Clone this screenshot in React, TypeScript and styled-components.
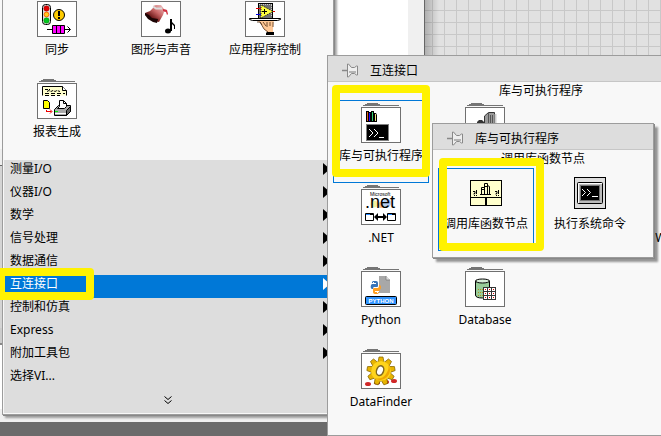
import React from "react";
import styled, { createGlobalStyle, css } from "styled-components";

const GlobalStyle = createGlobalStyle`
  * { box-sizing: border-box; }
  html, body, #root { height: 100%; }
  body {
    margin: 0;
    overflow: hidden;
    font: 12px/16px "Noto Sans", "Noto Sans CJK SC", sans-serif;
    color: #000;
  }
  button { font: inherit; color: inherit; border: 0; padding: 0; background: none; }
`;

/* ---------- desktop behind the palettes ---------- */

const Desktop = styled.main`
  position: relative;
  display: flex;
  flex-direction: column;
  min-height: 100vh;
  overflow: hidden;
  background: #f0f0f0;
`;

const Workspace = styled.div`
  display: flex;
  flex: 1;
`;

const WindowEdge = styled.div`
  flex: 0 0 3px;
  background: linear-gradient(
    #f8f8f8 149px, #eeeeee 149px, #eeeeee 165px, #666666 165px, #666666 166px,
    #d4d4d4 166px, #d4d4d4 328px, #cccccc 328px, #cccccc 343px,
    #888888 343px, #888888 345px, #ffffff 345px, #ffffff 409px, #f0f0f0 409px
  );
`;

const ProjectPane = styled.div`
  flex: 0 0 422px;
  border-right: 1px solid #666;
  background: linear-gradient(#fff, #fff) 0 0 / 405px 405px no-repeat #f0f0f0;
`;

const DiagramPane = styled.div`
  flex: 1;
  background-color: #e1e1e1;
  background-image:
    linear-gradient(90deg, rgba(0, 0, 0, 0.22), rgba(0, 0, 0, 0) 14px),
    linear-gradient(90deg, #c8c8c8 1px, transparent 1px),
    linear-gradient(#c8c8c8 1px, transparent 1px);
  background-size: auto, 12px 12px, 12px 12px;
  background-position: 0 0, 7px 0, 0 10px;
`;

const StatusStrip = styled.div`
  flex: 0 0 14px;
  background: #6b6b6b;
`;

/* ---------- floating palettes ---------- */

type Place = "functions" | "connectivity" | "libraries";

const places = {
  functions: css`
    left: 2px;
    top: -6px;
    width: 332px;
    border-top: 0;
    box-shadow: 1px 1px 0 #888, 3px 3px 2px rgba(0, 0, 0, 0.35);
  `,
  connectivity: css`
    left: 327px;
    top: 55px;
    width: 428px;
    height: 381px;
  `,
  libraries: css`
    left: 432px;
    top: 123px;
    width: 222px;
    height: 135px;
    box-shadow: 1px 1px 0 #888, 4px 4px 2px rgba(0, 0, 0, 0.4);
  `,
};

const Palette = styled.section<{ $place: Place }>`
  position: absolute;
  border: 1px solid #9c9c9c;
  background: #f8f8f8;
  ${(p) => places[p.$place]}
`;

const PaletteHeader = styled.header`
  display: flex;
  align-items: center;
  gap: 11px;
  height: 26px;
  padding: 5px 14px 0;
  background: #ddd;
  border-bottom: 1px solid #c6c6c6;
`;

const PinButton = styled.button`
  display: flex;
  width: 17px;
  height: 16px;
`;

const Title = styled.h2`
  margin: 0;
  font: inherit;
`;

const ItemName = styled.p`
  height: 18px;
  margin: 0;
  line-height: 18px;
  text-align: center;
`;

const TileGrid = styled.div<{ $columns: number }>`
  display: grid;
  grid-template-columns: repeat(${(p) => p.$columns}, 104px);
  grid-auto-rows: 82px;
  padding-left: 5px;
`;

const HomeGrid = styled(TileGrid)`
  height: 166px;
  padding-left: 6px;
`;

const TileButton = styled.button<{ $selected?: boolean; $column?: number }>`
  display: flex;
  flex-direction: column;
  align-items: center;
  width: 96px;
  height: 83px;
  border: 1px solid ${(p) => (p.$selected ? "#0078d7" : "transparent")};
  line-height: 14px;
  white-space: nowrap;
  ${(p) => p.$column && `grid-column: ${p.$column};`}
`;

const IconSlot = styled.span`
  display: flex;
  align-items: center;
  justify-content: center;
  flex: 0 0 48px;
`;

const Drawing = styled.svg`
  display: block;
  flex: none;
`;

/* ---------- category menu ---------- */

const Menu = styled.nav`
  margin: 0 1px 1px;
  background: #ddd;
`;

const MenuRow = styled.button<{ $active?: boolean }>`
  display: flex;
  align-items: center;
  justify-content: space-between;
  width: 100%;
  height: 23px;
  padding: 0 2px 5px 6px;
  text-align: left;
  background: ${(p) => (p.$active ? "#0078d7" : "transparent")};
  color: ${(p) => (p.$active ? "#fff" : "#000")};
`;

const MoreButton = styled.button`
  display: flex;
  align-items: center;
  justify-content: center;
  width: 100%;
  height: 23px;
  padding: 0 0 4px;
`;

/* ---------- highlighter boxes ---------- */

const marks = {
  category: css`left: -3px; top: 268px; width: 97px; height: 32px;`,
  library: css`left: 332px; top: 85px; width: 98px; height: 92px;`,
  node: css`left: 439px; top: 158px; width: 105px; height: 93px;`,
};

const Marker = styled.div<{ $mark: keyof typeof marks }>`
  position: absolute;
  border: 8px solid #fff200;
  border-radius: 4px;
  pointer-events: none;
  ${(p) => marks[p.$mark]}
`;

/* ---------- icons ---------- */

function Folder({ children }: { children: React.ReactNode }) {
  return (
    <Drawing width="40" height="44" viewBox="0 0 40 44" aria-hidden="true">
      <path d="M2 2h2V1h2V0h11v1h2v1h19v1H2z" fill="#757575" />
      <rect x="0.5" y="4.5" width="39" height="35" fill="#fff" stroke="#707070" />
      <g transform="translate(0 4)">{children}</g>
    </Drawing>
  );
}

const SyncIcon = () => (
  <Folder>
    <rect x="5.5" y="3.5" width="8" height="20" rx="3" fill="#ddd" stroke="#000" />
    <circle cx="9.5" cy="7.5" r="2.7" fill="#e00000" stroke="#900" strokeWidth="0.5" />
    <circle cx="9.5" cy="13.5" r="2.4" fill="#ffcc20" stroke="#f60" />
    <circle cx="9.5" cy="19.5" r="2.7" fill="#00c820" stroke="#080" strokeWidth="0.5" />
    <circle cx="22" cy="14" r="5.5" fill="#fc0" stroke="#000" />
    <path d="M21 10h2v5h-2zM21 16h2v2h-2z" />
    <path d="M10 28.5h5M28 28.5h5M30.5 25.5l3 3-3 3" fill="none" stroke="#000" />
    <path d="M15.5 24.5h12v8h-12z" fill="#f0f" stroke="#000" />
    <path d="M19.5 25v7M23.5 25v7" stroke="#000" />
  </Folder>
);

const GraphicsIcon = () => (
  <Folder>
    <defs>
      <linearGradient id="film" x1="1" y1="0" x2="0" y2="1">
        <stop offset="0" stopColor="#f7d6d6" />
        <stop offset="0.45" stopColor="#c86464" />
        <stop offset="0.7" stopColor="#701c1c" />
        <stop offset="1" stopColor="#100" />
      </linearGradient>
    </defs>
    <path d="M12 5l3-1h5l3 4 3 1v1l-3 1-1 3-4 7-5-1-9-6v-2l5-2 3-3z" fill="url(#film)" />
    <path d="M4 12l4 2 3 3 6 1-1 4-4-1-5-3-3-4z" fill="#1c0404" />
    <path d="M22 8l4 1 1 4-1 1-1-3-3-1z" fill="#d03040" />
    <path d="M12 5.500l3 2h6" fill="none" stroke="#ddd" strokeWidth="2" />
    <ellipse cx="27" cy="30" rx="3" ry="2.5" />
    <path d="M29 18h2v3l3 3v4h-1v-3l-2-2v7h-2z" />
  </Folder>
);

const AppControlIcon = () => (
  <Folder>
    <rect x="13.5" y="2.5" width="14" height="15" fill="#707070" stroke="#000" />
    <path d="M14 3.5h13M26.5 4v12" stroke="#ccc" strokeDasharray="1 1" />
    <path d="M16 4v13l12-6.5z" fill="#ffff40" stroke="#000" strokeWidth="0.8" strokeDasharray="1 1" />
    <path d="M19.5 8v5M17 10.5h5" stroke="#000" />
    <path d="M11 7.5h5M28 10.5h2" stroke="#e00000" />
    <path d="M11 13.5h5" stroke="#0000e0" />
    <path d="M12 20l3 1 4 7 3 3h6v-5l1-7z" fill="#ffc896" />
    <path d="M12 21h3l2 3M15 21l4 7 4 3M18 21l3 4M22 21v5M25 21v4M28 21v5" fill="none" stroke="#503018" strokeWidth="0.8" />
    <path d="M4.5 17.5h31v1l-3 1h-25l-3-1z" fill="#fff" stroke="#000" />
    <path d="M22 31h7v3h-8v-2z" />
  </Folder>
);

const ReportIcon = () => (
  <Folder>
    <path d="M5.5 12.5v-9h20l4 4v5" fill="#ffffcc" stroke="#000" />
    <path d="M25.5 3.5v4h4" fill="#fff" stroke="#000" />
    <path d="M8 6.5h5M10 8.5l2-1 2 1 2-1 2 1 2-1 3 1" fill="none" stroke="#000" strokeDasharray="3 1" />
    <path d="M8 10.5h20M8 12.5h15" stroke="#000" strokeDasharray="4 2" />
    <path d="M6.5 17.5h4l2 2v6h-6z" fill="#ff0" stroke="#000" />
    <path d="M9.5 27v2M9.5 28.5h5M13 26.5l2 2-2 2" fill="none" stroke="#e00" />
    <path d="M17.5 26.5l4-4h12v6l-4 4h-12z" fill="#aaa" stroke="#000" />
    <path d="M29.5 27.5v5l4-4v-5z" fill="#666" stroke="#000" />
    <path d="M22.5 23.5v-6h4l3 3v3l-2 2h-7z" fill="#fff" stroke="#000" />
    <path d="M26.5 17.5v3h3" fill="none" stroke="#000" />
    <path d="M18 28.5h3" stroke="#0f0" />
    <path d="M18 30.5h11" stroke="#fff" />
  </Folder>
);

const LibraryIcon = () => (
  <Folder>
    <path d="M5 4h3v11H5zM8 5h2v10H8zM10 4h3v11h-3zM13 6h2l1 2v7h-3z" />
    <path d="M6 5h1v9H6z" fill="#e06020" />
    <path d="M8 6h1v8H8z" fill="#20f" />
    <path d="M11 5h1v9h-1z" fill="#30d070" />
    <path d="M14 7h1v7h-1z" fill="#eee080" />
    <rect x="5.5" y="17.5" width="22" height="16" fill="#000" stroke="#808080" />
    <path d="M8 22l4 4-4 4M13 22l4 4-4 4M18 30.5h5" fill="none" stroke="#fff" />
  </Folder>
);

const ServerIcon = () => (
  <Folder>
    <path d="M19.5 16V9l4-3.5h6v11h-10" fill="#999" stroke="#333" />
    <path d="M23.5 6v11M25.5 8v9M27.5 8v9" stroke="#555" />
    <path d="M29.5 7h2v10h-2z" fill="#ccc" />
    <path d="M12 17v-2l2-2h3l2 2v2z" fill="#333" />
  </Folder>
);

const DotNetIcon = () => (
  <Folder>
    <circle cx="13" cy="15" r="3.5" fill="#f4f0a0" />
    <circle cx="20" cy="16" r="3" fill="#f6c090" />
    <circle cx="26" cy="14" r="4" fill="#b4ccf4" />
    <text x="9" y="7" fontFamily="Liberation Sans, sans-serif" fontSize="5">Microsoft</text>
    <text x="4" y="19" fontFamily="Liberation Sans, sans-serif" fontSize="18">.net</text>
    <path d="M4.5 24.5h8v7h-8zM26.5 24.5h8v7h-8z" fill="#fff" stroke="#000" />
    <path d="M5 25.5h4M27 25.5h4" stroke="#28f" />
    <path d="M9 25.5h3M31 25.5h3" stroke="#000" />
    <path d="M13 28l4-4v3h5v-3l4 4-4 4v-3h-5v3z" />
  </Folder>
);

const PythonIcon = () => (
  <Folder>
    <path d="M18 5h7l4 4v13H18z" fill="#a8a8a8" />
    <path d="M25 5v4h4" fill="#ddd" stroke="#777" strokeWidth="0.7" />
    <path d="M12 10h3q2 0 2 2v3q0 1-1 1h-3q-1 0-1 2h-1q-2-1-1-4l1-1h4v-1h-4v-1z" fill="#3974b8" />
    <path d="M18 14h1q2 2 0 5l-1 1h-4v1h4q0 2-3 2t-3-2v-3q0-1 1-1h4q1 0 1-3z" fill="#ff9e20" />
    <path d="M12 11h1v1h-1zM16 21h1v1h-1z" fill="#fff" />
    <rect x="4.5" y="25.5" width="31" height="8" rx="1" fill="#3094ff" stroke="#000" />
    <text x="20" y="32" textAnchor="middle" fontFamily="Liberation Sans, sans-serif" fontSize="6" fontWeight="bold" fill="#fff">PYTHON</text>
  </Folder>
);

const teeth = [0, 40, 80, 120, 160, 200, 240, 280, 320];

const GearIcon = () => (
  <Folder>
    <ellipse cx="7" cy="31" rx="3" ry="2" fill="#d02828" />
    <ellipse cx="16" cy="30" rx="3" ry="1.5" fill="#a02020" />
    <ellipse cx="25" cy="29" rx="3" ry="2" fill="#c02828" />
    <ellipse cx="33" cy="28" rx="3" ry="2" fill="#d02828" />
    <g transform="translate(20 18)">
      {teeth.map((a) => (
        <path key={a} transform={`rotate(${a})`} d="M-3-9l1-5h4l1 5z" fill="#e8b400" stroke="#806000" strokeWidth="0.7" />
      ))}
      <circle r="10" fill="#ffd41c" />
      <path d="M7-7a10 10 0 0 1-14 14q8 2 12-4t2-10z" fill="#f0a800" />
      <ellipse cx="-1" rx="3.5" ry="5" transform="rotate(20)" fill="#fff" stroke="#806820" strokeWidth="1.5" />
    </g>
  </Folder>
);

const DatabaseIcon = () => (
  <Folder>
    <path d="M10.5 10v14q0 3 7 3t7-3V10z" fill="#98cc98" stroke="#000" />
    <ellipse cx="17.5" cy="10" rx="7" ry="2" fill="#d8ecd8" stroke="#000" />
    <path d="M13 18.5h5M13 21.5h5M13 24.5h5" stroke="#b09020" strokeDasharray="1 1" />
    <rect x="18.5" y="16.5" width="12" height="12" fill="#fff" stroke="#333" />
    <path d="M22.5 17v11M26.5 17v11M19 20.5h11M19 24.5h11" stroke="#333" />
    <path d="M20 18.5h1M24 18.5h1M28 18.5h1M20 22.5h1M24 22.5h1M28 22.5h1M20 26.5h1M24 26.5h1M28 26.5h1" stroke="#e00000" />
  </Folder>
);

const CallLibraryIcon = () => (
  <Drawing width="32" height="26" viewBox="0 0 32 26" aria-hidden="true">
    <rect x="0.5" y="0.5" width="31" height="25" fill="#ffffcc" stroke="#000" />
    <path d="M1 17.5h30" stroke="#000" />
    <path d="M15 18h2v7h-2z" />
    <path d="M11.5 7.5h3v7h-3zM14.5 3.5h3v11h-3zM17.5 5.5l2 1v8h-2z" fill="#ffffcc" stroke="#000" />
    <path d="M10 14.5h11M12 9.5h2M15 6.5h2" stroke="#000" />
    <path d="M3 11.5h2v2h-1v1M4.500 15v1M6.5 10v4M6.5 15v1M25 11.5h2v2h-1v1M26.500 15v1M28.5 10v4M28.5 15v1" fill="none" stroke="#000" />
  </Drawing>
);

const CommandIcon = () => (
  <Drawing width="32" height="32" viewBox="0 0 32 32" aria-hidden="true">
    <rect x="0.5" y="0.5" width="31" height="31" fill="#ddd" stroke="#000" />
    <rect x="3.5" y="5.5" width="25" height="21" rx="1" fill="#bbb" stroke="#000" />
    <path d="M4.5 26V6.5H28" fill="none" stroke="#fff" />
    <rect x="6.5" y="8.5" width="19" height="15" fill="#000" stroke="#777" />
    <path d="M8 12l3.5 3.5L8 19M13 12l3.5 3.5L13 19M18 19.5h6" fill="none" stroke="#fff" />
  </Drawing>
);

const PinIcon = () => (
  <Drawing width="17" height="16" viewBox="0 0 17 16" aria-hidden="true">
    <path d="M0 7.5h5" stroke="#888" strokeWidth="1.5" />
    <path d="M5.5 1v13h1l3-3.5h3l2 1.500h1V3h-1l-2 1.500h-3L6.5 1z" fill="#eee" stroke="#888" />
    <path d="M7 8h7v2H7z" fill="#b4b4b4" />
  </Drawing>
);

const Arrow = () => (
  <Drawing width="7" height="12" viewBox="0 0 7 12" aria-hidden="true">
    <path d="M0 0l7 6-7 6z" fill="currentColor" />
  </Drawing>
);

const Chevrons = () => (
  <Drawing width="8" height="8" viewBox="0 0 8 8" aria-hidden="true">
    <path d="M0.5 0.5l3.5 3 3.5-3M0.5 4.5l3.5 3 3.5-3" fill="none" stroke="#000" />
  </Drawing>
);

/* ---------- content ---------- */

interface TileProps {
  label: string;
  icon?: React.ReactNode;
  selected?: boolean;
  column?: number;
}

function Tile({ label, icon, selected, column }: TileProps) {
  return (
    <TileButton type="button" $selected={selected} $column={column}>
      <IconSlot>{icon}</IconSlot>
      {label}
    </TileButton>
  );
}

function Header({ title }: { title: string }) {
  return (
    <PaletteHeader>
      <PinButton type="button" aria-label={title}>
        <PinIcon />
      </PinButton>
      <Title>{title}</Title>
    </PaletteHeader>
  );
}

const categories = [
  "测量I/O", "仪器I/O", "数学", "信号处理", "数据通信",
  "互连接口", "控制和仿真", "Express", "附加工具包", "选择VI...",
];

export default function App() {
  return (
    <>
      <GlobalStyle />
      <Desktop>
        <Workspace>
          <WindowEdge />
          <ProjectPane />
          <DiagramPane />
        </Workspace>
        <StatusStrip />

        <Palette $place="functions">
          <HomeGrid $columns={3}>
            <Tile label="同步" icon={<SyncIcon />} />
            <Tile label="图形与声音" icon={<GraphicsIcon />} />
            <Tile label="应用程序控制" icon={<AppControlIcon />} />
            <Tile label="报表生成" icon={<ReportIcon />} />
          </HomeGrid>
          <Menu>
            {categories.map((name) => (
              <MenuRow key={name} type="button" $active={name === "互连接口"}>
                {name}
                {name !== "选择VI..." && <Arrow />}
              </MenuRow>
            ))}
            <MoreButton type="button" aria-label="更多">
              <Chevrons />
            </MoreButton>
          </Menu>
        </Palette>
        <Marker $mark="category" />

        <Palette $place="connectivity">
          <Header title="互连接口" />
          <ItemName>库与可执行程序</ItemName>
          <TileGrid $columns={4}>
            <Tile label="库与可执行程序" icon={<LibraryIcon />} selected />
            <Tile label="" icon={<ServerIcon />} />
            <Tile label=".NET" icon={<DotNetIcon />} column={1} />
            <Tile label="Windows注册" column={4} />
            <Tile label="Python" icon={<PythonIcon />} column={1} />
            <Tile label="Database" icon={<DatabaseIcon />} />
            <Tile label="DataFinder" icon={<GearIcon />} column={1} />
          </TileGrid>
        </Palette>
        <Marker $mark="library" />

        <Palette $place="libraries">
          <Header title="库与可执行程序" />
          <ItemName>调用库函数节点</ItemName>
          <TileGrid $columns={2}>
            <Tile label="调用库函数节点" icon={<CallLibraryIcon />} selected />
            <Tile label="执行系统命令" icon={<CommandIcon />} />
          </TileGrid>
        </Palette>
        <Marker $mark="node" />
      </Desktop>
    </>
  );
}
